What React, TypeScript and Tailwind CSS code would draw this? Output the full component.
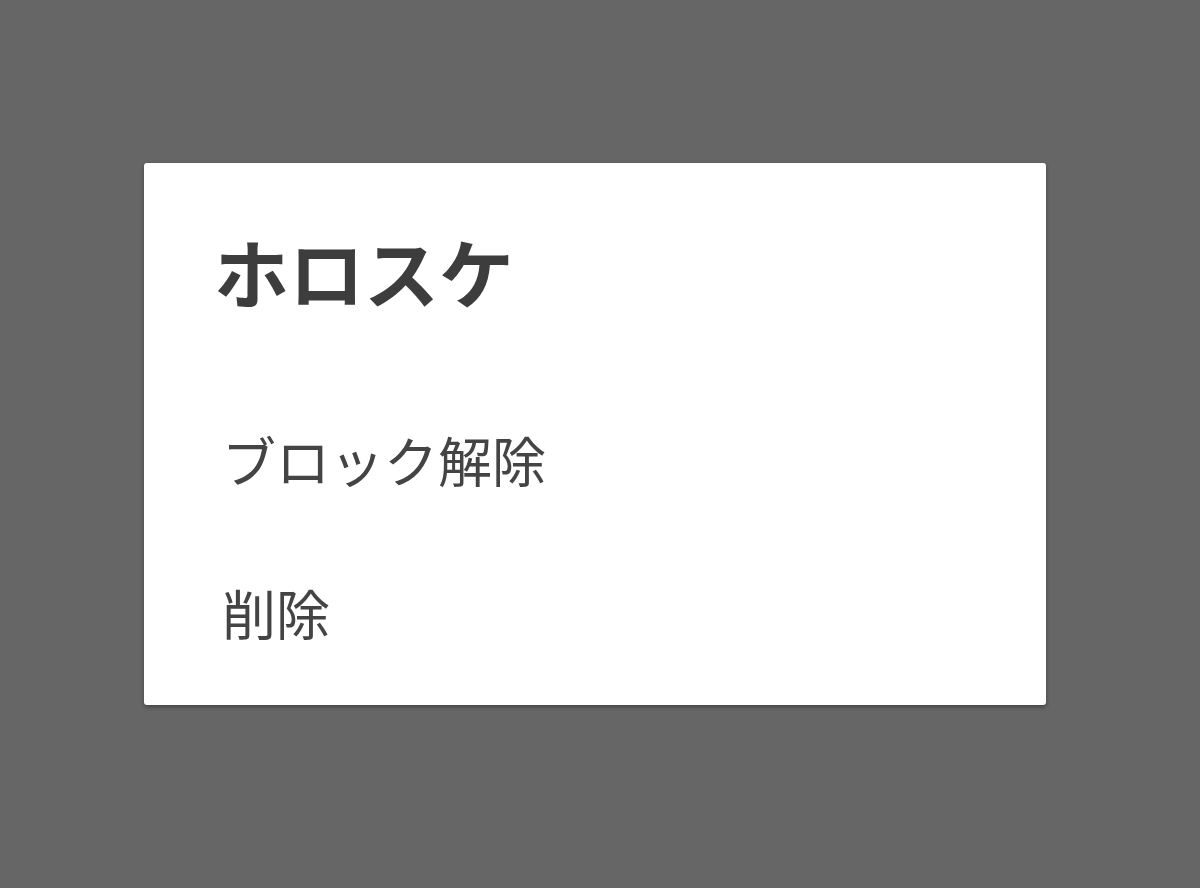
import React from "react";

export default function App() {
  return (
    <div
      className="w-[1200px] h-[888px] bg-[#666666] relative overflow-hidden"
      style={{ fontFamily: '"Noto Sans CJK JP", "Noto Sans", sans-serif' }}
    >
      <div className="absolute left-[144px] top-[163px] w-[902px] h-[542px] bg-white rounded-[3px] shadow-[0_2px_4px_rgba(0,0,0,0.35)] flex flex-col">
        <div className="pl-[70px] pt-[70px] h-[311px] box-border">
          <h1 className="text-[75px] leading-[75px] font-bold text-[#3d3d3d] m-0">ホロスケ</h1>
        </div>
        <div className="h-[153px] flex items-center pl-[78px] text-[54px] leading-none text-[#444444] mt-[-91px]">
          ブロック解除
        </div>
        <div className="h-[153px] flex items-center pl-[78px] text-[54px] leading-none text-[#444444]">
          削除
        </div>
      </div>
    </div>
  );
}
